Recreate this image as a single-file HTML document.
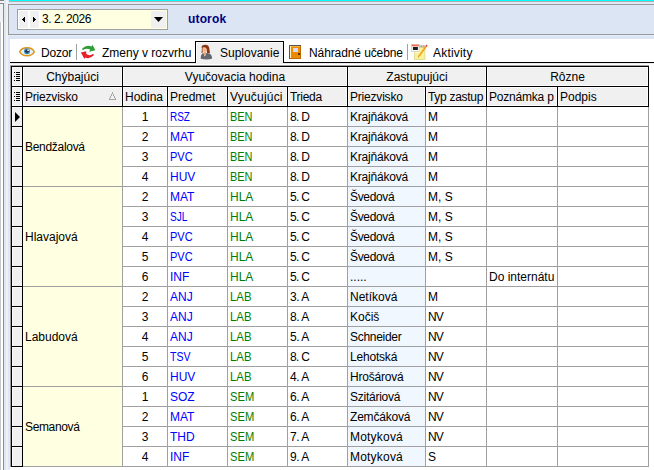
<!DOCTYPE html>
<html lang="sk"><head><meta charset="utf-8"><title>Suplovanie</title>
<style>
html,body{margin:0;padding:0;}
body{width:654px;height:470px;overflow:hidden;background:#fff;position:relative;font-family:"Liberation Sans",sans-serif;font-size:12px;color:#000;}
#root{position:absolute;left:0;top:0;width:654px;height:470px;overflow:hidden;background:#fff;}
#root div,#root svg,#root span.a{position:absolute;}
.t{white-space:nowrap;overflow:hidden;}
.c{text-align:center;}
.b{color:#0000ff;}
.g{color:#008000;}
</style></head><body><div id="root">
<!-- left window edge -->
<div style="left:0;top:0;width:4px;height:470px;background:#f2f2f2"></div>
<div style="left:0;top:22px;width:1px;height:448px;background:#c8c8c8"></div>
<div style="left:1px;top:22px;width:2px;height:448px;background:#fff"></div>
<div style="left:0;top:0;width:4px;height:1px;background:#808080"></div>
<div style="left:0;top:3px;width:4px;height:1px;background:#888"></div>
<div style="left:3px;top:3px;width:1px;height:467px;background:#888c98"></div>
<div style="left:4px;top:0;width:2px;height:470px;background:#dce8f6"></div>
<div style="left:6px;top:0;width:2px;height:470px;background:#f0f0f0"></div>
<div style="left:8px;top:0;width:2px;height:470px;background:#dce8f6"></div>
<!-- top bar -->
<div style="left:8px;top:0;width:646px;height:39px;background:#dbe5f3"></div>
<div style="left:8px;top:2px;width:646px;height:2px;background:#e0ebfa"></div>
<div style="left:9px;top:0;width:645px;height:1px;background:#00ffff"></div>
<div style="left:9px;top:1px;width:645px;height:1px;background:#b0aaaa"></div>
<div style="left:8px;top:4px;width:646px;height:1px;background:#999"></div>
<div style="left:8px;top:4px;width:1px;height:31px;background:#999"></div>
<div style="left:8px;top:34px;width:646px;height:1px;background:#999"></div>
<div style="left:9px;top:35px;width:645px;height:1px;background:#e4eefa"></div>
<!-- date combo -->
<div style="left:17px;top:9px;width:151px;height:21px;background:#a0a0a0"></div>
<div style="left:18px;top:10px;width:149px;height:19px;background:#fff"></div>
<div style="left:41px;top:10px;width:126px;height:19px;background:#ffffe1"></div>
<div style="left:19px;top:11px;width:9px;height:17px;background:#f0f0f0"></div>
<div style="left:30px;top:11px;width:9px;height:17px;background:#f0f0f0"></div>
<svg style="left:22px;top:17px" width="3" height="5" viewBox="0 0 3 5" shape-rendering="crispEdges"><path d="M3 0 L0 2.5 L3 5 Z" fill="#000"/></svg>
<svg style="left:33px;top:17px" width="3" height="5" viewBox="0 0 3 5" shape-rendering="crispEdges"><path d="M0 0 L3 2.5 L0 5 Z" fill="#000"/></svg>
<div class="t" style="left:42px;top:10px;width:100px;height:19px;line-height:19px;letter-spacing:-0.45px">3. 2. 2026</div>
<div style="left:151px;top:11px;width:15px;height:17px;background:#f0f0f0"></div>
<svg style="left:154px;top:17px" width="9" height="5" viewBox="0 0 9 5"><path d="M0 0 L9 0 L4.5 5 Z" fill="#000"/></svg>
<div class="t" style="left:188px;top:10px;width:80px;height:19px;line-height:19px;font-weight:bold;color:#000080;letter-spacing:0.15px">utorok</div>
<!-- tab strip -->
<div style="left:10px;top:39px;width:644px;height:431px;background:#fff"></div>
<div style="left:10px;top:62px;width:644px;height:1px;background:#000"></div>
<div style="left:10px;top:63px;width:644px;height:1px;background:#ececec"></div>
<div style="left:10px;top:65px;width:639px;height:1px;background:#a0a0a0"></div>
<div style="left:10px;top:65px;width:1px;height:402px;background:#a0a0a0"></div>
<!-- active tab -->
<div style="left:195px;top:41px;width:89px;height:22px;background:#000"></div>
<div style="left:196px;top:42px;width:87px;height:22px;background:#f0f0f0"></div>
<div style="left:196px;top:42px;width:87px;height:1px;background:#fafafa"></div>
<div style="left:196px;top:42px;width:1px;height:21px;background:#fafafa"></div>
<div class="t" style="left:41px;top:45px;width:40px;height:17px;line-height:17px;letter-spacing:-0.2px">Dozor</div>
<div style="left:76px;top:44px;width:1px;height:16px;background:#a0a0a0"></div>
<div class="t" style="left:102px;top:45px;width:100px;height:17px;line-height:17px;">Zmeny v rozvrhu</div>
<div class="t" style="left:220px;top:45px;width:70px;height:17px;line-height:17px;">Suplovanie</div>
<div class="t" style="left:309px;top:45px;width:110px;height:17px;line-height:17px;letter-spacing:-0.1px">Náhradné učebne</div>
<div style="left:407px;top:44px;width:1px;height:16px;background:#a0a0a0"></div>
<div class="t" style="left:433px;top:45px;width:60px;height:17px;line-height:17px;letter-spacing:0.2px">Aktivity</div>

<!-- eye -->
<svg style="left:18px;top:45px" width="18" height="13" viewBox="0 0 18 13">
<path d="M1.7 6.7 C4.2 1.4 13.8 1.4 16.3 6.7 C13.8 12.0 4.2 12.0 1.7 6.7 Z" fill="#e4f1fb" stroke="#dd9414" stroke-width="1.5" stroke-linejoin="round"/>
<circle cx="9" cy="6.2" r="3.0" fill="#3a86c4"/>
<circle cx="9" cy="6.2" r="1.7" fill="#2b3640"/>
<rect x="9.3" y="4.4" width="1.6" height="1.6" fill="#e8eef4"/>
</svg>
<!-- change arrows -->
<svg style="left:80px;top:44px" width="17" height="16" viewBox="0 0 17 16">
<path d="M2.2 4.6 Q6.5 0.2 11.6 2.6 L12.4 0.8 L15.4 6.3 L9.3 7.8 L10.2 5.6 Q6.2 3.4 2.6 6.2 Z" fill="#2f9e36"/>
<path d="M13.8 11.2 Q9.5 15.6 5.2 13.4 L4.4 15.0 L0.9 8.4 L6.2 7.2 L6.3 10.0 Q9.8 12.4 13.4 9.8 Z" fill="#e8202a"/>
</svg>
<!-- person -->
<svg style="left:199px;top:44px" width="15" height="16" viewBox="0 0 15 16">
<path d="M1.8 14.7 Q1.3 10.4 4.4 9.1 L8.0 8.9 Q10.0 9.0 11.6 10.2 Q13.3 12.0 13.0 14.8 Q7.4 16.3 1.8 14.7 Z" fill="#64686c"/>
<path d="M4.6 9.2 L5.6 12.6 L6.4 11.4 L7.4 9.2 Z" fill="#eef0f2"/>
<path d="M4.9 8.0 L6.9 8.0 L6.7 10.2 L5.7 11.6 L4.9 10.2 Z" fill="#ee9c6a"/>
<path d="M3.5 4.4 Q4.6 2.4 7.0 3.2 Q8.8 4.6 8.1 6.8 Q7.4 8.6 5.8 9.0 Q3.2 7.8 3.5 4.4 Z" fill="#f6b892"/>
<path d="M2.5 3.0 Q3.0 0.9 6.4 0.8 Q9.7 0.8 10.3 4.2 Q10.5 7.0 11.1 8.9 Q9.4 9.6 8.0 9.0 Q8.6 6.2 7.4 4.2 Q5.4 2.6 3.6 3.6 Q3.4 6.4 3.7 8.7 L2.3 8.8 Q2.9 6.4 2.9 4.4 Z" fill="#8a3814"/>
</svg>
<!-- door -->
<svg style="left:289px;top:45px" width="12" height="14" viewBox="0 0 12 14" shape-rendering="crispEdges">
<rect x="0" y="0" width="12" height="14" fill="#5a5650"/>
<rect x="1" y="1" width="11" height="13" fill="#ec8a06"/>
<rect x="1" y="1" width="1" height="13" fill="#fff0c0"/>
<rect x="2" y="1" width="10" height="1" fill="#f6b040"/>
<rect x="4" y="3" width="5" height="4" fill="#d6dcf2"/>
<rect x="9" y="8" width="2" height="2" fill="#4a3a20"/>
<rect x="11" y="1" width="1" height="13" fill="#c06800"/>
<rect x="1" y="13" width="11" height="1" fill="#c06800"/>
</svg>
<!-- note -->
<svg style="left:411px;top:44px" width="17" height="16" viewBox="0 0 17 16">
<rect x="3.6" y="2.6" width="10.3" height="12.8" fill="#f8f39a" stroke="#d9d27a" stroke-width="0.7"/>
<rect x="4.2" y="3.2" width="5" height="6" fill="#fbf8c0"/>
<rect x="8.4" y="0.8" width="1" height="3" fill="#8e94a0"/><rect x="10.4" y="0.8" width="1" height="3" fill="#8e94a0"/><rect x="12.4" y="0.8" width="1" height="3" fill="#8e94a0"/>
<rect x="0.5" y="0.4" width="7.6" height="6.9" fill="#ffffff" stroke="#c4c4c4" stroke-width="0.6"/>
<rect x="0.8" y="0.6" width="7" height="1.8" fill="#ee6a50"/>
<rect x="1.9" y="3.0" width="5.0" height="3.0" fill="#1c1c1c"/>
<path d="M14.6 1.6 L16.0 2.8 L8.6 12.6 L6.9 13.6 L7.4 11.6 Z" fill="#f5a21a"/>
<path d="M6.9 13.6 L7.2 12.4 L8.0 13.0 Z" fill="#8a7a66"/>
<circle cx="15.6" cy="1.7" r="0.85" fill="#d83434"/>
</svg>

<!-- grid -->
<div style="left:11px;top:66px;width:638px;height:41px;background:#000;"></div>
<div style="left:12px;top:67px;width:10px;height:19px;background:#f0f0f0;box-shadow:inset 0 0 0 1px #fbfbfb;"></div>
<div style="left:23px;top:67px;width:99px;height:19px;background:#f0f0f0;box-shadow:inset 0 0 0 1px #fbfbfb;"></div>
<div class="t c " style="left:23px;top:68px;width:99px;height:19px;line-height:19px;">Chýbajúci</div>
<div style="left:123px;top:67px;width:224px;height:19px;background:#f0f0f0;box-shadow:inset 0 0 0 1px #fbfbfb;"></div>
<div class="t c " style="left:123px;top:68px;width:224px;height:19px;line-height:19px;">Vyučovacia hodina</div>
<div style="left:348px;top:67px;width:138px;height:19px;background:#f0f0f0;box-shadow:inset 0 0 0 1px #fbfbfb;"></div>
<div class="t c " style="left:348px;top:68px;width:138px;height:19px;line-height:19px;">Zastupujúci</div>
<div style="left:487px;top:67px;width:161px;height:19px;background:#f0f0f0;box-shadow:inset 0 0 0 1px #fbfbfb;"></div>
<div class="t c " style="left:487px;top:68px;width:161px;height:19px;line-height:19px;">Rôzne</div>
<div style="left:12px;top:87px;width:10px;height:19px;background:#f0f0f0;box-shadow:inset 0 0 0 1px #fbfbfb;"></div>
<div style="left:23px;top:87px;width:99px;height:19px;background:#f0f0f0;box-shadow:inset 0 0 0 1px #fbfbfb;"></div>
<div class="t " style="left:25px;top:88px;width:97px;height:19px;line-height:19px;letter-spacing:-0.2px;">Priezvisko</div>
<div style="left:123px;top:87px;width:44px;height:19px;background:#f0f0f0;box-shadow:inset 0 0 0 1px #fbfbfb;"></div>
<div class="t " style="left:125px;top:88px;width:42px;height:19px;line-height:19px;">Hodina</div>
<div style="left:168px;top:87px;width:59px;height:19px;background:#f0f0f0;box-shadow:inset 0 0 0 1px #fbfbfb;"></div>
<div class="t " style="left:170px;top:88px;width:57px;height:19px;line-height:19px;">Predmet</div>
<div style="left:228px;top:87px;width:59px;height:19px;background:#f0f0f0;box-shadow:inset 0 0 0 1px #fbfbfb;"></div>
<div class="t " style="left:230px;top:88px;width:57px;height:19px;line-height:19px;letter-spacing:0.2px;">Vyučujúci</div>
<div style="left:288px;top:87px;width:59px;height:19px;background:#f0f0f0;box-shadow:inset 0 0 0 1px #fbfbfb;"></div>
<div class="t " style="left:290px;top:88px;width:57px;height:19px;line-height:19px;letter-spacing:-0.3px;">Trieda</div>
<div style="left:348px;top:87px;width:77px;height:19px;background:#f0f0f0;box-shadow:inset 0 0 0 1px #fbfbfb;"></div>
<div class="t " style="left:350px;top:88px;width:75px;height:19px;line-height:19px;letter-spacing:-0.2px;">Priezvisko</div>
<div style="left:426px;top:87px;width:60px;height:19px;background:#f0f0f0;box-shadow:inset 0 0 0 1px #fbfbfb;"></div>
<div class="t " style="left:428px;top:88px;width:58px;height:19px;line-height:19px;letter-spacing:-0.3px;">Typ zastup</div>
<div style="left:487px;top:87px;width:70px;height:19px;background:#f0f0f0;box-shadow:inset 0 0 0 1px #fbfbfb;"></div>
<div class="t " style="left:489px;top:88px;width:68px;height:19px;line-height:19px;letter-spacing:-0.2px;">Poznámka p</div>
<div style="left:558px;top:87px;width:90px;height:19px;background:#f0f0f0;box-shadow:inset 0 0 0 1px #fbfbfb;"></div>
<div class="t " style="left:560px;top:88px;width:88px;height:19px;line-height:19px;">Podpis</div>
<svg style="left:14px;top:72px" width="7" height="9" viewBox="0 0 7 9" shape-rendering="crispEdges"><rect x="2" y="0" width="4" height="1" fill="#000"/><rect x="0" y="0" width="1" height="1" fill="#000"/><rect x="2" y="2" width="4" height="1" fill="#000"/><rect x="2" y="4" width="4" height="1" fill="#000"/><rect x="0" y="4" width="1" height="1" fill="#000"/><rect x="2" y="6" width="4" height="1" fill="#000"/><rect x="2" y="8" width="4" height="1" fill="#000"/><rect x="0" y="8" width="1" height="1" fill="#000"/></svg>
<svg style="left:14px;top:92px" width="7" height="9" viewBox="0 0 7 9" shape-rendering="crispEdges"><rect x="2" y="0" width="4" height="1" fill="#000"/><rect x="0" y="0" width="1" height="1" fill="#000"/><rect x="2" y="2" width="4" height="1" fill="#000"/><rect x="2" y="4" width="4" height="1" fill="#000"/><rect x="0" y="4" width="1" height="1" fill="#000"/><rect x="2" y="6" width="4" height="1" fill="#000"/><rect x="2" y="8" width="4" height="1" fill="#000"/><rect x="0" y="8" width="1" height="1" fill="#000"/></svg>
<svg style="left:109px;top:92px" width="7" height="8" viewBox="0 0 7 8" shape-rendering="crispEdges"><rect x="3" y="0" width="1" height="1" fill="#a4a4a4"/><rect x="3" y="1" width="1" height="1" fill="#a4a4a4"/><rect x="2" y="2" width="1" height="1" fill="#a4a4a4"/><rect x="4" y="2" width="1" height="1" fill="#a4a4a4"/><rect x="2" y="3" width="1" height="1" fill="#a4a4a4"/><rect x="4" y="3" width="1" height="1" fill="#a4a4a4"/><rect x="1" y="4" width="1" height="1" fill="#a4a4a4"/><rect x="5" y="4" width="1" height="1" fill="#a4a4a4"/><rect x="1" y="5" width="1" height="1" fill="#a4a4a4"/><rect x="5" y="5" width="1" height="1" fill="#a4a4a4"/><rect x="0" y="6" width="1" height="1" fill="#a4a4a4"/><rect x="6" y="6" width="1" height="1" fill="#a4a4a4"/><rect x="0" y="7" width="7" height="1" fill="#a4a4a4"/></svg>
<div style="left:12px;top:107px;width:10px;height:359px;background:#f0f0f0;"></div>
<div style="left:23px;top:107px;width:99px;height:359px;background:#ffffe1;"></div>
<div style="left:348px;top:107px;width:77px;height:359px;background:#f0f7ff;"></div>
<div style="left:11px;top:107px;width:1px;height:360px;background:#000;"></div>
<div style="left:22px;top:107px;width:1px;height:360px;background:#000;"></div>
<div style="left:122px;top:107px;width:1px;height:360px;background:#a0a0a0;"></div>
<div style="left:167px;top:107px;width:1px;height:360px;background:#a0a0a0;"></div>
<div style="left:227px;top:107px;width:1px;height:360px;background:#a0a0a0;"></div>
<div style="left:287px;top:107px;width:1px;height:360px;background:#a0a0a0;"></div>
<div style="left:347px;top:107px;width:1px;height:360px;background:#a0a0a0;"></div>
<div style="left:425px;top:107px;width:1px;height:360px;background:#a0a0a0;"></div>
<div style="left:486px;top:107px;width:1px;height:360px;background:#a0a0a0;"></div>
<div style="left:557px;top:107px;width:1px;height:360px;background:#a0a0a0;"></div>
<div style="left:648px;top:107px;width:1px;height:360px;background:#a0a0a0;"></div>
<div style="left:11px;top:126px;width:12px;height:1px;background:#000;"></div>
<div style="left:12px;top:107px;width:10px;height:1px;background:#fbfbfb;"></div>
<div style="left:12px;top:107px;width:1px;height:19px;background:#fbfbfb;"></div>
<div style="left:123px;top:126px;width:526px;height:1px;background:#a0a0a0;"></div>
<div class="t c" style="left:123px;top:108px;width:44px;height:19px;line-height:19px;">1</div>
<div class="t b" style="left:170px;top:108px;width:56px;height:19px;line-height:19px;"><span style="display:inline-block;transform:scaleX(0.83);transform-origin:0 50%">RSZ</span></div>
<div class="t g" style="left:230px;top:108px;width:56px;height:19px;line-height:19px;"><span style="display:inline-block;transform:scaleX(0.91);transform-origin:0 50%">BEN</span></div>
<div class="t " style="left:290px;top:108px;width:56px;height:19px;line-height:19px;letter-spacing:-0.7px;">8. D</div>
<div class="t " style="left:350px;top:108px;width:75px;height:19px;line-height:19px;letter-spacing:-0.2px;">Krajňáková</div>
<div class="t " style="left:428px;top:108px;width:57px;height:19px;line-height:19px;">M</div>
<div style="left:11px;top:146px;width:12px;height:1px;background:#000;"></div>
<div style="left:12px;top:127px;width:10px;height:1px;background:#fbfbfb;"></div>
<div style="left:12px;top:127px;width:1px;height:19px;background:#fbfbfb;"></div>
<div style="left:123px;top:146px;width:526px;height:1px;background:#a0a0a0;"></div>
<div class="t c" style="left:123px;top:128px;width:44px;height:19px;line-height:19px;">2</div>
<div class="t b" style="left:170px;top:128px;width:56px;height:19px;line-height:19px;">MAT</div>
<div class="t g" style="left:230px;top:128px;width:56px;height:19px;line-height:19px;"><span style="display:inline-block;transform:scaleX(0.91);transform-origin:0 50%">BEN</span></div>
<div class="t " style="left:290px;top:128px;width:56px;height:19px;line-height:19px;letter-spacing:-0.7px;">8. D</div>
<div class="t " style="left:350px;top:128px;width:75px;height:19px;line-height:19px;letter-spacing:-0.2px;">Krajňáková</div>
<div class="t " style="left:428px;top:128px;width:57px;height:19px;line-height:19px;">M</div>
<div style="left:11px;top:166px;width:12px;height:1px;background:#000;"></div>
<div style="left:12px;top:147px;width:10px;height:1px;background:#fbfbfb;"></div>
<div style="left:12px;top:147px;width:1px;height:19px;background:#fbfbfb;"></div>
<div style="left:123px;top:166px;width:526px;height:1px;background:#a0a0a0;"></div>
<div class="t c" style="left:123px;top:148px;width:44px;height:19px;line-height:19px;">3</div>
<div class="t b" style="left:170px;top:148px;width:56px;height:19px;line-height:19px;"><span style="display:inline-block;transform:scaleX(0.92);transform-origin:0 50%">PVC</span></div>
<div class="t g" style="left:230px;top:148px;width:56px;height:19px;line-height:19px;"><span style="display:inline-block;transform:scaleX(0.91);transform-origin:0 50%">BEN</span></div>
<div class="t " style="left:290px;top:148px;width:56px;height:19px;line-height:19px;letter-spacing:-0.7px;">8. D</div>
<div class="t " style="left:350px;top:148px;width:75px;height:19px;line-height:19px;letter-spacing:-0.2px;">Krajňáková</div>
<div class="t " style="left:428px;top:148px;width:57px;height:19px;line-height:19px;">M</div>
<div style="left:11px;top:186px;width:12px;height:1px;background:#000;"></div>
<div style="left:12px;top:167px;width:10px;height:1px;background:#fbfbfb;"></div>
<div style="left:12px;top:167px;width:1px;height:19px;background:#fbfbfb;"></div>
<div style="left:23px;top:186px;width:100px;height:1px;background:#a0a0a0;"></div>
<div style="left:123px;top:186px;width:526px;height:1px;background:#a0a0a0;"></div>
<div class="t c" style="left:123px;top:168px;width:44px;height:19px;line-height:19px;">4</div>
<div class="t b" style="left:170px;top:168px;width:56px;height:19px;line-height:19px;">HUV</div>
<div class="t g" style="left:230px;top:168px;width:56px;height:19px;line-height:19px;"><span style="display:inline-block;transform:scaleX(0.91);transform-origin:0 50%">BEN</span></div>
<div class="t " style="left:290px;top:168px;width:56px;height:19px;line-height:19px;letter-spacing:-0.7px;">8. D</div>
<div class="t " style="left:350px;top:168px;width:75px;height:19px;line-height:19px;letter-spacing:-0.2px;">Krajňáková</div>
<div class="t " style="left:428px;top:168px;width:57px;height:19px;line-height:19px;">M</div>
<div class="t " style="left:25px;top:108px;width:97px;height:79px;line-height:79px;letter-spacing:-0.3px;">Bendžalová</div>
<div style="left:11px;top:206px;width:12px;height:1px;background:#000;"></div>
<div style="left:12px;top:187px;width:10px;height:1px;background:#fbfbfb;"></div>
<div style="left:12px;top:187px;width:1px;height:19px;background:#fbfbfb;"></div>
<div style="left:123px;top:206px;width:526px;height:1px;background:#a0a0a0;"></div>
<div class="t c" style="left:123px;top:188px;width:44px;height:19px;line-height:19px;">2</div>
<div class="t b" style="left:170px;top:188px;width:56px;height:19px;line-height:19px;">MAT</div>
<div class="t g" style="left:230px;top:188px;width:56px;height:19px;line-height:19px;">HLA</div>
<div class="t " style="left:290px;top:188px;width:56px;height:19px;line-height:19px;letter-spacing:-0.7px;">5. C</div>
<div class="t " style="left:350px;top:188px;width:75px;height:19px;line-height:19px;letter-spacing:-0.35px;">Švedová</div>
<div class="t " style="left:428px;top:188px;width:57px;height:19px;line-height:19px;">M, S</div>
<div style="left:11px;top:226px;width:12px;height:1px;background:#000;"></div>
<div style="left:12px;top:207px;width:10px;height:1px;background:#fbfbfb;"></div>
<div style="left:12px;top:207px;width:1px;height:19px;background:#fbfbfb;"></div>
<div style="left:123px;top:226px;width:526px;height:1px;background:#a0a0a0;"></div>
<div class="t c" style="left:123px;top:208px;width:44px;height:19px;line-height:19px;">3</div>
<div class="t b" style="left:170px;top:208px;width:56px;height:19px;line-height:19px;"><span style="display:inline-block;transform:scaleX(0.84);transform-origin:0 50%">SJL</span></div>
<div class="t g" style="left:230px;top:208px;width:56px;height:19px;line-height:19px;">HLA</div>
<div class="t " style="left:290px;top:208px;width:56px;height:19px;line-height:19px;letter-spacing:-0.7px;">5. C</div>
<div class="t " style="left:350px;top:208px;width:75px;height:19px;line-height:19px;letter-spacing:-0.35px;">Švedová</div>
<div class="t " style="left:428px;top:208px;width:57px;height:19px;line-height:19px;">M, S</div>
<div style="left:11px;top:246px;width:12px;height:1px;background:#000;"></div>
<div style="left:12px;top:227px;width:10px;height:1px;background:#fbfbfb;"></div>
<div style="left:12px;top:227px;width:1px;height:19px;background:#fbfbfb;"></div>
<div style="left:123px;top:246px;width:526px;height:1px;background:#a0a0a0;"></div>
<div class="t c" style="left:123px;top:228px;width:44px;height:19px;line-height:19px;">4</div>
<div class="t b" style="left:170px;top:228px;width:56px;height:19px;line-height:19px;"><span style="display:inline-block;transform:scaleX(0.92);transform-origin:0 50%">PVC</span></div>
<div class="t g" style="left:230px;top:228px;width:56px;height:19px;line-height:19px;">HLA</div>
<div class="t " style="left:290px;top:228px;width:56px;height:19px;line-height:19px;letter-spacing:-0.7px;">5. C</div>
<div class="t " style="left:350px;top:228px;width:75px;height:19px;line-height:19px;letter-spacing:-0.35px;">Švedová</div>
<div class="t " style="left:428px;top:228px;width:57px;height:19px;line-height:19px;">M, S</div>
<div style="left:11px;top:266px;width:12px;height:1px;background:#000;"></div>
<div style="left:12px;top:247px;width:10px;height:1px;background:#fbfbfb;"></div>
<div style="left:12px;top:247px;width:1px;height:19px;background:#fbfbfb;"></div>
<div style="left:123px;top:266px;width:526px;height:1px;background:#a0a0a0;"></div>
<div class="t c" style="left:123px;top:248px;width:44px;height:19px;line-height:19px;">5</div>
<div class="t b" style="left:170px;top:248px;width:56px;height:19px;line-height:19px;"><span style="display:inline-block;transform:scaleX(0.92);transform-origin:0 50%">PVC</span></div>
<div class="t g" style="left:230px;top:248px;width:56px;height:19px;line-height:19px;">HLA</div>
<div class="t " style="left:290px;top:248px;width:56px;height:19px;line-height:19px;letter-spacing:-0.7px;">5. C</div>
<div class="t " style="left:350px;top:248px;width:75px;height:19px;line-height:19px;letter-spacing:-0.35px;">Švedová</div>
<div class="t " style="left:428px;top:248px;width:57px;height:19px;line-height:19px;">M, S</div>
<div style="left:11px;top:286px;width:12px;height:1px;background:#000;"></div>
<div style="left:12px;top:267px;width:10px;height:1px;background:#fbfbfb;"></div>
<div style="left:12px;top:267px;width:1px;height:19px;background:#fbfbfb;"></div>
<div style="left:23px;top:286px;width:100px;height:1px;background:#a0a0a0;"></div>
<div style="left:123px;top:286px;width:526px;height:1px;background:#a0a0a0;"></div>
<div class="t c" style="left:123px;top:268px;width:44px;height:19px;line-height:19px;">6</div>
<div class="t b" style="left:170px;top:268px;width:56px;height:19px;line-height:19px;">INF</div>
<div class="t g" style="left:230px;top:268px;width:56px;height:19px;line-height:19px;">HLA</div>
<div class="t " style="left:290px;top:268px;width:56px;height:19px;line-height:19px;letter-spacing:-0.7px;">5. C</div>
<div class="t " style="left:350px;top:268px;width:75px;height:19px;line-height:19px;">.....</div>
<div class="t " style="left:428px;top:268px;width:57px;height:19px;line-height:19px;"></div>
<div class="t " style="left:489px;top:268px;width:68px;height:19px;line-height:19px;">Do internátu</div>
<div class="t " style="left:25px;top:188px;width:97px;height:99px;line-height:99px;">Hlavajová</div>
<div style="left:11px;top:306px;width:12px;height:1px;background:#000;"></div>
<div style="left:12px;top:287px;width:10px;height:1px;background:#fbfbfb;"></div>
<div style="left:12px;top:287px;width:1px;height:19px;background:#fbfbfb;"></div>
<div style="left:123px;top:306px;width:526px;height:1px;background:#a0a0a0;"></div>
<div class="t c" style="left:123px;top:288px;width:44px;height:19px;line-height:19px;">2</div>
<div class="t b" style="left:170px;top:288px;width:56px;height:19px;line-height:19px;">ANJ</div>
<div class="t g" style="left:230px;top:288px;width:56px;height:19px;line-height:19px;"><span style="display:inline-block;transform:scaleX(0.95);transform-origin:0 50%">LAB</span></div>
<div class="t " style="left:290px;top:288px;width:56px;height:19px;line-height:19px;letter-spacing:-0.5px;">3. A</div>
<div class="t " style="left:350px;top:288px;width:75px;height:19px;line-height:19px;">Netíková</div>
<div class="t " style="left:428px;top:288px;width:57px;height:19px;line-height:19px;">M</div>
<div style="left:11px;top:326px;width:12px;height:1px;background:#000;"></div>
<div style="left:12px;top:307px;width:10px;height:1px;background:#fbfbfb;"></div>
<div style="left:12px;top:307px;width:1px;height:19px;background:#fbfbfb;"></div>
<div style="left:123px;top:326px;width:526px;height:1px;background:#a0a0a0;"></div>
<div class="t c" style="left:123px;top:308px;width:44px;height:19px;line-height:19px;">3</div>
<div class="t b" style="left:170px;top:308px;width:56px;height:19px;line-height:19px;">ANJ</div>
<div class="t g" style="left:230px;top:308px;width:56px;height:19px;line-height:19px;"><span style="display:inline-block;transform:scaleX(0.95);transform-origin:0 50%">LAB</span></div>
<div class="t " style="left:290px;top:308px;width:56px;height:19px;line-height:19px;letter-spacing:-0.5px;">8. A</div>
<div class="t " style="left:350px;top:308px;width:75px;height:19px;line-height:19px;">Kočiš</div>
<div class="t " style="left:428px;top:308px;width:57px;height:19px;line-height:19px;letter-spacing:-1px;">NV</div>
<div style="left:11px;top:346px;width:12px;height:1px;background:#000;"></div>
<div style="left:12px;top:327px;width:10px;height:1px;background:#fbfbfb;"></div>
<div style="left:12px;top:327px;width:1px;height:19px;background:#fbfbfb;"></div>
<div style="left:123px;top:346px;width:526px;height:1px;background:#a0a0a0;"></div>
<div class="t c" style="left:123px;top:328px;width:44px;height:19px;line-height:19px;">4</div>
<div class="t b" style="left:170px;top:328px;width:56px;height:19px;line-height:19px;">ANJ</div>
<div class="t g" style="left:230px;top:328px;width:56px;height:19px;line-height:19px;"><span style="display:inline-block;transform:scaleX(0.95);transform-origin:0 50%">LAB</span></div>
<div class="t " style="left:290px;top:328px;width:56px;height:19px;line-height:19px;letter-spacing:-0.5px;">5. A</div>
<div class="t " style="left:350px;top:328px;width:75px;height:19px;line-height:19px;letter-spacing:-0.3px;">Schneider</div>
<div class="t " style="left:428px;top:328px;width:57px;height:19px;line-height:19px;letter-spacing:-1px;">NV</div>
<div style="left:11px;top:366px;width:12px;height:1px;background:#000;"></div>
<div style="left:12px;top:347px;width:10px;height:1px;background:#fbfbfb;"></div>
<div style="left:12px;top:347px;width:1px;height:19px;background:#fbfbfb;"></div>
<div style="left:123px;top:366px;width:526px;height:1px;background:#a0a0a0;"></div>
<div class="t c" style="left:123px;top:348px;width:44px;height:19px;line-height:19px;">5</div>
<div class="t b" style="left:170px;top:348px;width:56px;height:19px;line-height:19px;"><span style="display:inline-block;transform:scaleX(0.88);transform-origin:0 50%">TSV</span></div>
<div class="t g" style="left:230px;top:348px;width:56px;height:19px;line-height:19px;"><span style="display:inline-block;transform:scaleX(0.95);transform-origin:0 50%">LAB</span></div>
<div class="t " style="left:290px;top:348px;width:56px;height:19px;line-height:19px;letter-spacing:-0.7px;">8. C</div>
<div class="t " style="left:350px;top:348px;width:75px;height:19px;line-height:19px;letter-spacing:-0.2px;">Lehotská</div>
<div class="t " style="left:428px;top:348px;width:57px;height:19px;line-height:19px;letter-spacing:-1px;">NV</div>
<div style="left:11px;top:386px;width:12px;height:1px;background:#000;"></div>
<div style="left:12px;top:367px;width:10px;height:1px;background:#fbfbfb;"></div>
<div style="left:12px;top:367px;width:1px;height:19px;background:#fbfbfb;"></div>
<div style="left:23px;top:386px;width:100px;height:1px;background:#a0a0a0;"></div>
<div style="left:123px;top:386px;width:526px;height:1px;background:#a0a0a0;"></div>
<div class="t c" style="left:123px;top:368px;width:44px;height:19px;line-height:19px;">6</div>
<div class="t b" style="left:170px;top:368px;width:56px;height:19px;line-height:19px;">HUV</div>
<div class="t g" style="left:230px;top:368px;width:56px;height:19px;line-height:19px;"><span style="display:inline-block;transform:scaleX(0.95);transform-origin:0 50%">LAB</span></div>
<div class="t " style="left:290px;top:368px;width:56px;height:19px;line-height:19px;letter-spacing:-0.5px;">4. A</div>
<div class="t " style="left:350px;top:368px;width:75px;height:19px;line-height:19px;letter-spacing:-0.2px;">Hrošárová</div>
<div class="t " style="left:428px;top:368px;width:57px;height:19px;line-height:19px;letter-spacing:-1px;">NV</div>
<div class="t " style="left:25px;top:288px;width:97px;height:99px;line-height:99px;">Labudová</div>
<div style="left:11px;top:406px;width:12px;height:1px;background:#000;"></div>
<div style="left:12px;top:387px;width:10px;height:1px;background:#fbfbfb;"></div>
<div style="left:12px;top:387px;width:1px;height:19px;background:#fbfbfb;"></div>
<div style="left:123px;top:406px;width:526px;height:1px;background:#a0a0a0;"></div>
<div class="t c" style="left:123px;top:388px;width:44px;height:19px;line-height:19px;">1</div>
<div class="t b" style="left:170px;top:388px;width:56px;height:19px;line-height:19px;">SOZ</div>
<div class="t g" style="left:230px;top:388px;width:56px;height:19px;line-height:19px;"><span style="display:inline-block;transform:scaleX(0.93);transform-origin:0 50%">SEM</span></div>
<div class="t " style="left:290px;top:388px;width:56px;height:19px;line-height:19px;letter-spacing:-0.5px;">6. A</div>
<div class="t " style="left:350px;top:388px;width:75px;height:19px;line-height:19px;letter-spacing:-0.25px;">Szitáriová</div>
<div class="t " style="left:428px;top:388px;width:57px;height:19px;line-height:19px;letter-spacing:-1px;">NV</div>
<div style="left:11px;top:426px;width:12px;height:1px;background:#000;"></div>
<div style="left:12px;top:407px;width:10px;height:1px;background:#fbfbfb;"></div>
<div style="left:12px;top:407px;width:1px;height:19px;background:#fbfbfb;"></div>
<div style="left:123px;top:426px;width:526px;height:1px;background:#a0a0a0;"></div>
<div class="t c" style="left:123px;top:408px;width:44px;height:19px;line-height:19px;">2</div>
<div class="t b" style="left:170px;top:408px;width:56px;height:19px;line-height:19px;">MAT</div>
<div class="t g" style="left:230px;top:408px;width:56px;height:19px;line-height:19px;"><span style="display:inline-block;transform:scaleX(0.93);transform-origin:0 50%">SEM</span></div>
<div class="t " style="left:290px;top:408px;width:56px;height:19px;line-height:19px;letter-spacing:-0.5px;">6. A</div>
<div class="t " style="left:350px;top:408px;width:75px;height:19px;line-height:19px;letter-spacing:-0.2px;">Zemčáková</div>
<div class="t " style="left:428px;top:408px;width:57px;height:19px;line-height:19px;letter-spacing:-1px;">NV</div>
<div style="left:11px;top:446px;width:12px;height:1px;background:#000;"></div>
<div style="left:12px;top:427px;width:10px;height:1px;background:#fbfbfb;"></div>
<div style="left:12px;top:427px;width:1px;height:19px;background:#fbfbfb;"></div>
<div style="left:123px;top:446px;width:526px;height:1px;background:#a0a0a0;"></div>
<div class="t c" style="left:123px;top:428px;width:44px;height:19px;line-height:19px;">3</div>
<div class="t b" style="left:170px;top:428px;width:56px;height:19px;line-height:19px;">THD</div>
<div class="t g" style="left:230px;top:428px;width:56px;height:19px;line-height:19px;"><span style="display:inline-block;transform:scaleX(0.93);transform-origin:0 50%">SEM</span></div>
<div class="t " style="left:290px;top:428px;width:56px;height:19px;line-height:19px;letter-spacing:-0.5px;">7. A</div>
<div class="t " style="left:350px;top:428px;width:75px;height:19px;line-height:19px;letter-spacing:0.2px;">Motyková</div>
<div class="t " style="left:428px;top:428px;width:57px;height:19px;line-height:19px;letter-spacing:-1px;">NV</div>
<div style="left:11px;top:466px;width:12px;height:1px;background:#000;"></div>
<div style="left:12px;top:447px;width:10px;height:1px;background:#fbfbfb;"></div>
<div style="left:12px;top:447px;width:1px;height:19px;background:#fbfbfb;"></div>
<div style="left:23px;top:466px;width:100px;height:1px;background:#a0a0a0;"></div>
<div style="left:123px;top:466px;width:526px;height:1px;background:#a0a0a0;"></div>
<div class="t c" style="left:123px;top:448px;width:44px;height:19px;line-height:19px;">4</div>
<div class="t b" style="left:170px;top:448px;width:56px;height:19px;line-height:19px;">INF</div>
<div class="t g" style="left:230px;top:448px;width:56px;height:19px;line-height:19px;"><span style="display:inline-block;transform:scaleX(0.93);transform-origin:0 50%">SEM</span></div>
<div class="t " style="left:290px;top:448px;width:56px;height:19px;line-height:19px;letter-spacing:-0.5px;">9. A</div>
<div class="t " style="left:350px;top:448px;width:75px;height:19px;line-height:19px;letter-spacing:0.2px;">Motyková</div>
<div class="t " style="left:428px;top:448px;width:57px;height:19px;line-height:19px;">S</div>
<div class="t " style="left:25px;top:388px;width:97px;height:79px;line-height:79px;letter-spacing:-0.35px;">Semanová</div>
<svg style="left:15px;top:112px" width="5" height="10" viewBox="0 0 5 10"><path d="M0 0 L5 5 L0 10 Z" fill="#000"/></svg>
</div></body></html>
